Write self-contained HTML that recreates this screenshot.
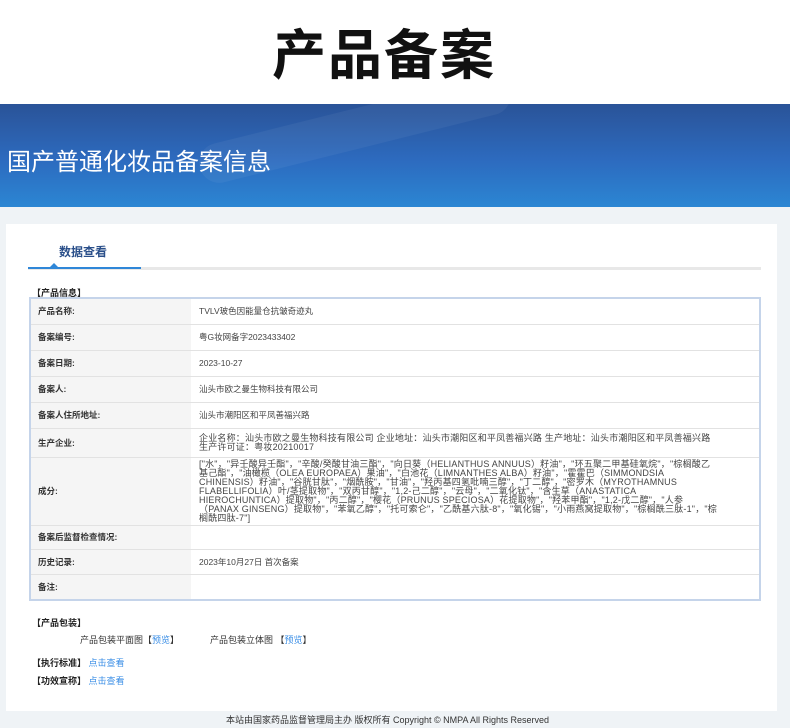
<!DOCTYPE html>
<html><head><meta charset="utf-8"><style>
*{margin:0;padding:0;box-sizing:border-box}
body{width:790px;height:728px;background:#fff;font-family:"Liberation Sans","Noto Sans CJK SC",sans-serif;overflow:hidden;position:relative}
.top{position:absolute;left:272px;top:0;width:240px;height:104px;font-size:54px;font-weight:bold;line-height:112px;color:#111;letter-spacing:2px;white-space:nowrap}
.ban{position:absolute;top:104px;left:0;width:790px;height:103px;background:linear-gradient(180deg,#2a5398 0%,#2d6bbf 55%,#2b86d3 100%);overflow:hidden}
.ban .t{position:absolute;left:7px;top:38px;color:#fff;font-size:24px}
.ban .s{position:absolute;left:195px;top:5px;width:320px;height:40px;border-radius:20px;background:rgba(255,255,255,.05);transform:rotate(-14deg)}
.gray{position:absolute;top:207px;left:0;width:790px;height:521px;background:#eff3f6}
.card{position:absolute;top:224px;left:6px;width:771px;height:487px;background:#fff}
.tab{position:absolute;left:59px;top:243px;font-size:12px;color:#2a4f8a;font-weight:bold}
.tl{position:absolute;left:28px;top:267px;width:733px;height:3px;background:#e8e8e8}
.tb{position:absolute;left:28px;top:267px;width:113px;height:2px;background:#2f87d8}
.tri{position:absolute;left:50px;top:263px;width:0;height:0;border-left:4px solid transparent;border-right:4px solid transparent;border-bottom:4px solid #2f87d8}
.h{position:absolute;font-size:9px;font-weight:bold;color:#222}
table{position:absolute;left:29px;top:297px;width:732px;border-collapse:collapse;border:2px solid #c5d4ea;font-size:8.5px;color:#444}
td{border-bottom:1px solid #e2e2e2;vertical-align:middle;padding:0 8px}
td.l{width:161px;background:#f5f5f5;font-weight:bold;color:#333;padding-left:7px}
td.v{line-height:9px;padding-right:40px;font-size:9px;letter-spacing:.2px}
a{color:#3a8ee6;text-decoration:none}
.sm{position:absolute;font-size:9px;color:#333}
.foot{position:absolute;top:713px;left:226px;font-size:9px;color:#333}
</style></head><body>
<div class="top">产品备案</div>
<div class="ban"><div class="s"></div><div class="t">国产普通化妆品备案信息</div></div>
<div class="gray"></div>
<div class="card"></div>
<div class="tab">数据查看</div>
<div class="tl"></div><div class="tb"></div><div class="tri"></div>
<div class="h" style="left:32px;top:286px">【产品信息】</div>
<table>
<tr style="height:26px"><td class="l">产品名称:</td><td>TVLV玻色因能量仓抗皱奇迹丸</td></tr>
<tr style="height:26px"><td class="l">备案编号:</td><td>粤G妆网备字2023433402</td></tr>
<tr style="height:26px"><td class="l">备案日期:</td><td>2023-10-27</td></tr>
<tr style="height:26px"><td class="l">备案人:</td><td>汕头市欧之曼生物科技有限公司</td></tr>
<tr style="height:26px"><td class="l">备案人住所地址:</td><td>汕头市潮阳区和平凤善福兴路</td></tr>
<tr style="height:29px"><td class="l">生产企业:</td><td class="v">企业名称：汕头市欧之曼生物科技有限公司 企业地址：汕头市潮阳区和平凤善福兴路 生产地址：汕头市潮阳区和平凤善福兴路 生产许可证：粤妆20210017</td></tr>
<tr style="height:68px"><td class="l">成分:</td><td class="v">["水"，"异壬酸异壬酯"，"辛酸/癸酸甘油三酯"，"向日葵（HELIANTHUS ANNUUS）籽油"，"环五聚二甲基硅氧烷"，"棕榈酸乙基己酯"，"油橄榄（OLEA EUROPAEA）果油"，"白池花（LIMNANTHES ALBA）籽油"，"霍霍巴（SIMMONDSIA CHINENSIS）籽油"，"谷胱甘肽"，"烟酰胺"，"甘油"，"羟丙基四氢吡喃三醇"，"丁二醇"，"密罗木（MYROTHAMNUS FLABELLIFOLIA）叶/茎提取物"，"双丙甘醇"，"1,2-己二醇"，"云母"，"二氧化钛"，"含生草（ANASTATICA HIEROCHUNTICA）提取物"，"丙二醇"，"樱花（PRUNUS SPECIOSA）花提取物"，"羟苯甲酯"，"1,2-戊二醇"，"人参（PANAX GINSENG）提取物"，"苯氧乙醇"，"托可索仑"，"乙酰基六肽-8"，"氧化锡"，"小雨燕窝提取物"，"棕榈酰三肽-1"，"棕榈酰四肽-7"]</td></tr>
<tr style="height:24px"><td class="l">备案后监督检查情况:</td><td></td></tr>
<tr style="height:25px"><td class="l">历史记录:</td><td>2023年10月27日 首次备案</td></tr>
<tr style="height:26px"><td class="l">备注:</td><td></td></tr>
</table>
<div class="h" style="left:32px;top:616px">【产品包装】</div>
<div class="sm" style="left:80px;top:633px">产品包装平面图【<a>预览</a>】</div>
<div class="sm" style="left:210px;top:633px">产品包装立体图 【<a>预览</a>】</div>
<div class="h" style="left:32px;top:656px">【执行标准】 <a style="font-weight:normal">点击查看</a></div>
<div class="h" style="left:32px;top:674px">【功效宣称】 <a style="font-weight:normal">点击查看</a></div>
<div class="foot">本站由国家药品监督管理局主办 版权所有 Copyright © NMPA All Rights Reserved</div>
</body></html>
